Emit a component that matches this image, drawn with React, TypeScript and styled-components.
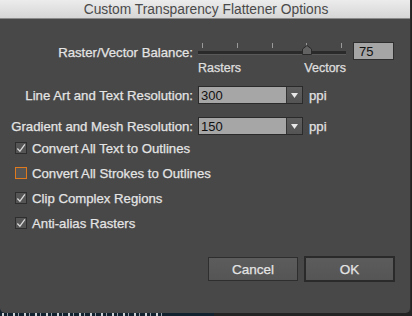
import styled, { createGlobalStyle } from "styled-components";

const GlobalStyle = createGlobalStyle`
  html, body {
    margin: 0;
    padding: 0;
    background: #1c1c1c;
  }
  body {
    font-family: "Liberation Sans", Arial, sans-serif;
  }
`;

const Desktop = styled.div`
  position: relative;
  width: 412px;
  height: 316px;
  overflow: hidden;
  background: linear-gradient(to right, #13222f 0, #13222f 214px, #232323 214px);
`;

// glimpse of the document window behind the dialog
const Backdrop = styled.div`
  position: absolute;
  left: 2px;
  top: 313px;
  width: 160px;
  height: 3px;
  background: repeating-linear-gradient(
    to right,
    #c9ced3 0 2px,
    transparent 2px 5px,
    #9aa3ab 5px 6px,
    transparent 6px 11px
  );
`;

const Dialog = styled.div`
  position: relative;
  width: 411px;
  height: 313px;
  display: flex;
  flex-direction: column;
  background: #484848;
  border-right: 1px solid #2b2b2b;
  border-radius: 0 0 5px 5px;
  box-sizing: border-box;
  overflow: hidden;
`;

const TitleBar = styled.div`
  height: 19px;
  flex: none;
  display: flex;
  align-items: center;
  justify-content: center;
  background: linear-gradient(#ececec, #d6d6d6);
  border-bottom: 1px solid #8a8a8a;
  box-sizing: border-box;
  color: #4a4a4a;
  font-size: 13.8px;
  padding-left: 2px;
`;

const Body = styled.div`
  flex: 1;
  display: flex;
  flex-direction: column;
  padding: 23px 0 0 0;
  color: #e4e4e4;
  font-size: 13.2px;
  -webkit-text-stroke: 0.25px #e4e4e4;
`;

const Row = styled.div<{ $height: number; $gap: number }>`
  display: grid;
  grid-template-columns: 193px auto;
  column-gap: 5px;
  align-items: center;
  height: ${(p) => p.$height}px;
  margin-bottom: ${(p) => p.$gap}px;
`;

const Label = styled.div<{ $top?: boolean }>`
  text-align: right;
  white-space: nowrap;
  align-self: ${(p) => (p.$top ? "start" : "center")};
  margin-top: ${(p) => (p.$top ? "3px" : "0")};
`;

const SliderGroup = styled.div`
  display: flex;
  align-items: flex-start;
  gap: 7px;
`;

const SliderCol = styled.div`
  width: 148px;
  display: flex;
  flex-direction: column;
`;

const Ticks = styled.div`
  height: 6px;
  margin: 1px 4px 0 4px;
  display: flex;
  justify-content: space-between;
`;

const Tick = styled.span`
  width: 1px;
  height: 5px;
  background: #9a9a9a;
`;

const Track = styled.div`
  position: relative;
  height: 3px;
  margin-top: 2px;
  background: #2a2a2a;
  border-bottom: 1px solid #595959;
`;

const Thumb = styled.svg`
  position: absolute;
  top: -6px;
  margin-left: -5px;
`;

const Ends = styled.div`
  display: flex;
  justify-content: space-between;
  margin-top: 6px;
  font-size: 12.5px;
  color: #dcdcdc;
`;

const NumberBox = styled.div`
  width: 41px;
  height: 18px;
  box-sizing: border-box;
  background: #a5a5a5;
  border: 1px solid #2e2e2e;
  color: #111;
  font-size: 13px;
  -webkit-text-stroke: 0;
  padding: 1px 0 0 5px;
`;

const ControlLine = styled.div`
  display: flex;
  align-items: center;
  gap: 6px;
`;

const Select = styled.div`
  width: 105px;
  height: 18px;
  box-sizing: border-box;
  display: flex;
  border: 1px solid #2a2a2a;
  background: #a6a6a6;
`;

const SelectValue = styled.div`
  flex: 1;
  color: #111;
  font-size: 13px;
  -webkit-text-stroke: 0;
  padding: 1px 0 0 2px;
`;

const SelectArrow = styled.div`
  width: 15px;
  display: flex;
  align-items: center;
  justify-content: center;
  background: linear-gradient(#5e5e5e, #545454);
  border-left: 1px solid #333;
`;

const Unit = styled.span`
  color: #e0e0e0;
`;

const Checks = styled.div`
  display: flex;
  flex-direction: column;
  gap: 13px;
  padding: 7px 0 0 15px;
`;

const CheckRow = styled.label`
  display: flex;
  align-items: center;
  gap: 5px;
  height: 12px;
  white-space: nowrap;
`;

const Box = styled.span<{ $focus?: boolean }>`
  width: 12px;
  height: 12px;
  box-sizing: border-box;
  display: flex;
  align-items: center;
  justify-content: center;
  background: #555;
  border: 1px solid ${(p) => (p.$focus ? "#e07a1f" : "#2e2e2e")};
`;

const Buttons = styled.div`
  display: flex;
  justify-content: flex-end;
  align-items: center;
  gap: 6px;
  margin-top: 27px;
  padding-right: 15px;
`;

const Button = styled.button<{ $primary?: boolean }>`
  width: ${(p) => (p.$primary ? 91 : 90)}px;
  height: ${(p) => (p.$primary ? 26 : 24)}px;
  box-sizing: border-box;
  background: linear-gradient(#5c5c5c, #555555);
  border: ${(p) => (p.$primary ? "2px solid #2a2a2a" : "1px solid #2e2e2e")};
  color: #e4e4e4;
  font-family: "Liberation Sans", Arial, sans-serif;
  font-size: 13.5px;
  padding: 0;
`;

const Check = () => (
  <svg width="11" height="11" viewBox="0 0 11 11">
    <path d="M1.5 5.5 L4.3 8.5 L9.8 1" fill="none" stroke="#d8d8d8" strokeWidth="1.4" />
  </svg>
);

const Checkbox = ({ label, checked, focus }: { label: string; checked?: boolean; focus?: boolean }) => (
  <CheckRow>
    <Box $focus={focus}>{checked && <Check />}</Box>
    {label}
  </CheckRow>
);

const Dropdown = ({ value }: { value: string }) => (
  <ControlLine>
    <Select>
      <SelectValue>{value}</SelectValue>
      <SelectArrow>
        <svg width="7" height="5" viewBox="0 0 7 5">
          <path d="M0 0 H7 L3.5 5 Z" fill="#e8e8e8" />
        </svg>
      </SelectArrow>
    </Select>
    <Unit>ppi</Unit>
  </ControlLine>
);

export default function App() {
  const ticks = [0, 1, 2, 3, 4];
  const balance = 75;
  return (
    <>
      <GlobalStyle />
      <Desktop>
        <Backdrop />
        <Dialog>
          <TitleBar>Custom Transparency Flattener Options</TitleBar>
          <Body>
            <Row $height={30} $gap={14}>
              <Label $top>Raster/Vector Balance:</Label>
              <SliderGroup>
                <SliderCol>
                  <Ticks>
                    {ticks.map((t) => (
                      <Tick key={t} />
                    ))}
                  </Ticks>
                  <Track>
                    <Thumb
                      width="10"
                      height="10"
                      viewBox="0 0 10 10"
                      style={{ left: `${4 + (140 * balance) / 100}px` }}
                    >
                      <path d="M0.5 9.5 V4 L5 0.5 L9.5 4 V9.5 Z" fill="#626262" stroke="#2a2a2a" />
                    </Thumb>
                  </Track>
                  <Ends>
                    <span>Rasters</span>
                    <span>Vectors</span>
                  </Ends>
                </SliderCol>
                <NumberBox>{balance}</NumberBox>
              </SliderGroup>
            </Row>
            <Row $height={18} $gap={13}>
              <Label>Line Art and Text Resolution:</Label>
              <Dropdown value="300" />
            </Row>
            <Row $height={18} $gap={0}>
              <Label>Gradient and Mesh Resolution:</Label>
              <Dropdown value="150" />
            </Row>
            <Checks>
              <Checkbox label="Convert All Text to Outlines" checked />
              <Checkbox label="Convert All Strokes to Outlines" focus />
              <Checkbox label="Clip Complex Regions" checked />
              <Checkbox label="Anti-alias Rasters" checked />
            </Checks>
            <Buttons>
              <Button>Cancel</Button>
              <Button $primary>OK</Button>
            </Buttons>
          </Body>
        </Dialog>
      </Desktop>
    </>
  );
}
